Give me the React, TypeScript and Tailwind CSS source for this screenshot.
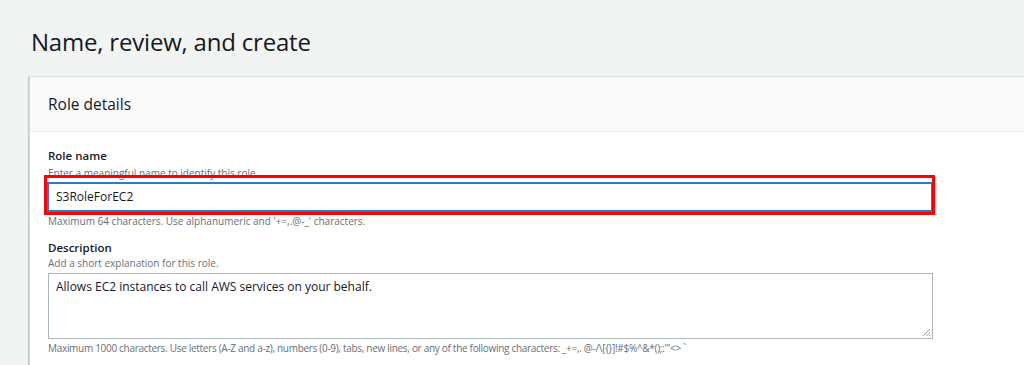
import React from "react";

const ResizeGrip: React.FC = () => (
  <svg
    className="absolute right-[1px] bottom-[1px]"
    width="9"
    height="9"
    viewBox="0 0 9 9"
  >
    <path d="M8 1 L1 8 M8 4 L4 8 M8 7 L7 8" stroke="#9aa3a5" strokeWidth="1" />
  </svg>
);

const App: React.FC = () => {
  return (
    <div className="w-[1024px] h-[365px] overflow-hidden bg-[#f2f3f3] text-[#16191f] font-['Open_Sans',sans-serif]">
      {/* Page title */}
      <h1 className="pl-[31px] pt-[26px] text-[24px] leading-[32px] font-normal tracking-[-0.2px]">
        Name, review, and create
      </h1>

      {/* Role details card */}
      <div className="mt-[18px] ml-[29px] bg-white border-l border-t border-[#dcdfe0] shadow-[0_1px_1px_0_rgba(0,28,36,0.3),-1px_1px_1px_0_rgba(0,28,36,0.15)]">
        <div className="h-[55px] bg-[#fafafa] border-b border-[#eaeded] pl-[18px] flex items-center">
          <h2 className="text-[15.5px] leading-[22px] font-normal">Role details</h2>
        </div>

        <div className="pl-[18px] pt-[16px] pb-[20px]">
          {/* Role name */}
          <div className="text-[11.5px] leading-[16px] font-semibold">Role name</div>
          <div className="mt-[2px] text-[10px] leading-[14px] text-[#687078]">
            Enter a meaningful name to identify this role.
          </div>
          <div className="relative mt-[2px] -ml-[1px] w-[886px]">
            <div className="h-[30px] border-2 border-[#2b7cc5] bg-white flex items-center pl-[7px] text-[12px]">
              S3RoleForEC2
            </div>
            <div className="absolute -top-[7px] -left-[3px] -right-[2px] -bottom-[3px] border-[3px] border-[#ff0000] pointer-events-none" />
          </div>
          <div className="mt-[2px] text-[10px] leading-[14px] text-[#687078]">
            Maximum 64 characters. Use alphanumeric and '+=,.@-_' characters.
          </div>

          {/* Description */}
          <div className="mt-[12px] text-[11.5px] leading-[16px] font-semibold">Description</div>
          <div className="text-[10px] leading-[14px] text-[#687078]">
            Add a short explanation for this role.
          </div>
          <div className="relative mt-[3px] w-[885px] h-[66px] border border-[#aab7b8] bg-white pl-[7px] pt-[3px] text-[12px] leading-[20px]">
            Allows EC2 instances to call AWS services on your behalf.
            <ResizeGrip />
          </div>
          <div className="mt-[2px] text-[10px] leading-[14px] text-[#687078] whitespace-nowrap tracking-[-0.3px]">
            Maximum 1000 characters. Use letters (A-Z and a-z), numbers (0-9), tabs, new lines, or any of the following characters: _+=,. @-/\[{"{}"}]!#$%^&amp;*();:'"&lt;&gt; `
          </div>
        </div>
      </div>
    </div>
  );
};

export default App;
